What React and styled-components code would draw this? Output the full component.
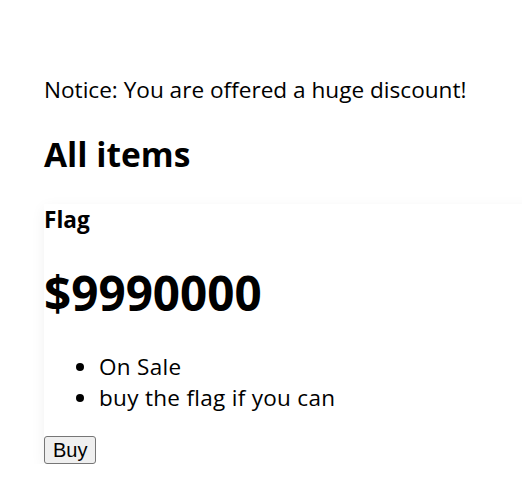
import React from "react";
import styled, { createGlobalStyle } from "styled-components";

const GlobalStyle = createGlobalStyle`
  html, body {
    margin: 0;
    background: #fff;
    overflow: hidden;
  }
  body {
    font-family: "Open Sans", "Noto Sans", sans-serif;
    color: #000;
  }
`;

const Page = styled.main`
  padding: 74px 0 0 44px;
`;

const Notice = styled.p`
  margin: 0;
  font-size: 22.6px;
  line-height: 32px;
`;

const Title = styled.h2`
  margin: 26px 0 28px;
  font-size: 33.5px;
  line-height: 44px;
  font-weight: 700;
`;

const Card = styled.section`
  width: 520px;
  background: #fff;
  box-shadow: 0 4px 14px rgba(0, 0, 0, 0.06);
`;

const ItemName = styled.h4`
  margin: 0;
  font-size: 22.6px;
  line-height: 32px;
  font-weight: 700;
`;

const Price = styled.h1`
  margin: 29px 0 30px;
  font-size: 47.6px;
  line-height: 56px;
  font-weight: 700;
`;

const Features = styled.ul`
  margin: 0 0 23px;
  padding-left: 55px;
  font-size: 22.5px;
  line-height: 31px;
  letter-spacing: 0.3px;
`;

const BuyButton = styled.button`
  display: block;
  height: 28px;
  padding: 0 8px;
  font-family: "Liberation Sans", Arial, sans-serif;
  font-size: 20px;
  color: #000;
  background: #efefef;
  border: 1px solid #767676;
  border-radius: 3px;
`;

const App = () => {
  return (
    <>
      <GlobalStyle />
      <Page>
        <Notice>Notice: You are offered a huge discount!</Notice>
        <Title>All items</Title>
        <Card>
          <ItemName>Flag</ItemName>
          <Price>$9990000</Price>
          <Features>
            <li>On Sale</li>
            <li>buy the flag if you can</li>
          </Features>
          <BuyButton>Buy</BuyButton>
        </Card>
      </Page>
    </>
  );
};

export default App;
